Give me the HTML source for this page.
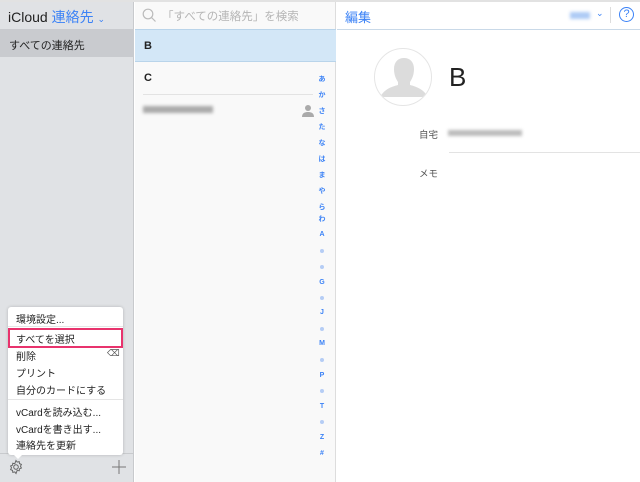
<!DOCTYPE html>
<html><head><meta charset="utf-8"><style>
*{margin:0;padding:0;box-sizing:border-box}
body{width:640px;height:482px;overflow:hidden;font-family:"Liberation Sans","Noto Sans CJK JP",sans-serif;background:#fff;position:relative;color:#222}
.a{position:absolute}
.blur{background:#aaa;filter:blur(1.5px);height:7px}
.idx{position:absolute;left:316px;width:12px;text-align:center;font-size:7px;color:#3b82f6;font-weight:bold}
.dot{position:absolute;left:320px;width:4px;height:4px;border-radius:50%;background:#b5cdf5}
.mi{position:absolute;left:16px;font-size:10px;color:#222}
</style></head><body>
<div class="a" style="left:0;top:0;width:640px;height:2px;background:#e2e2e2"></div>
<div class="a" style="left:0;top:2px;width:134px;height:480px;background:#e0e2e5;border-right:1px solid #c8cacd"></div>
<div class="a" style="left:8px;top:7px;font-size:14px;color:#222">iCloud <span style="color:#3b82f6">連絡先</span> <span style="color:#3b82f6;font-size:9px">⌄</span></div>
<div class="a" style="left:0;top:29px;width:134px;height:28px;background:#c9cbcf"></div>
<div class="a" style="left:9px;top:37px;font-size:11px">すべての連絡先</div>
<div class="a" style="left:0;top:453px;width:134px;height:1px;background:#c8cacd"></div>
<svg class="a" style="left:8px;top:459px" width="16" height="16" viewBox="0 0 16 16" fill="none" stroke="#666" stroke-width="1"><circle cx="8" cy="8" r="2.3"/><path d="M8 1.5l1.2 1.6 2-.5.3 2 1.9.8-.9 1.8.9 1.8-1.9.8-.3 2-2-.5L8 14.5l-1.2-1.6-2 .5-.3-2-1.9-.8.9-1.8-.9-1.8 1.9-.8.3-2 2 .5z"/></svg>
<svg class="a" style="left:112px;top:460px" width="14" height="14" viewBox="0 0 14 14" stroke="#777" stroke-width="1"><path d="M7 0v14M0 7h14"/></svg>
<div class="a" style="left:8px;top:307px;width:115px;height:148px;background:#fff;border-radius:3px;box-shadow:0 0 3px rgba(0,0,0,.2)"></div>
<div class="a" style="left:12px;top:453px;width:0;height:0;border-left:6px solid transparent;border-right:6px solid transparent;border-top:6px solid #fff"></div>
<div class="mi" style="top:311px">環境設定...</div>
<div class="a" style="left:8px;top:326px;width:115px;height:1px;background:#e5e5e5"></div>
<div class="a" style="left:8px;top:328px;width:115px;height:20px;border:2px solid #e8336d"></div>
<div class="mi" style="top:331px">すべてを選択</div>
<div class="mi" style="top:348px">削除</div>
<div class="a" style="left:107px;top:348px;font-size:9px;color:#555">⌫</div>
<div class="mi" style="top:365px">プリント</div>
<div class="mi" style="top:382px">自分のカードにする</div>
<div class="a" style="left:8px;top:399px;width:115px;height:1px;background:#e5e5e5"></div>
<div class="mi" style="top:404px">vCardを読み込む...</div>
<div class="mi" style="top:421px">vCardを書き出す...</div>
<div class="mi" style="top:437px">連絡先を更新</div>
<div class="a" style="left:135px;top:2px;width:201px;height:480px;background:#f9f9f9;border-right:1px solid #ddd"></div>
<svg class="a" style="left:142px;top:8px" width="14" height="14" viewBox="0 0 14 14" fill="none" stroke="#bbb" stroke-width="1.2"><circle cx="6" cy="6" r="4.8"/><path d="M9.5 9.5l4 4"/></svg>
<div class="a" style="left:162px;top:8px;font-size:11.5px;color:#b5b5b5">「すべての連絡先」を検索</div>
<div class="a" style="left:135px;top:29px;width:201px;height:33px;background:#d3e7f7;border-top:1px solid #b9d4ea;border-bottom:1px solid #b9d4ea"></div>
<div class="a" style="left:144px;top:40px;font-size:11px;font-weight:bold">B</div>
<div class="a" style="left:144px;top:72px;font-size:11px;font-weight:bold">C</div>
<div class="a" style="left:143px;top:94px;width:170px;height:1px;background:#e3e3e3"></div>
<div class="a blur" style="left:143px;top:106px;width:70px"></div>
<svg class="a" style="left:302px;top:104px" width="12" height="13" viewBox="0 0 12 13" fill="#aaa"><circle cx="6" cy="4" r="3"/><path d="M0 13c0-4 3-5 6-5s6 1 6 5z"/></svg>
<div class="idx" style="top:74px">あ</div><div class="idx" style="top:90px">か</div><div class="idx" style="top:106px">さ</div><div class="idx" style="top:122px">た</div><div class="idx" style="top:138px">な</div><div class="idx" style="top:154px">は</div><div class="idx" style="top:170px">ま</div><div class="idx" style="top:186px">や</div><div class="idx" style="top:202px">ら</div><div class="idx" style="top:214px">わ</div><div class="idx" style="top:231px">A</div>
<div class="dot" style="top:249px"></div><div class="dot" style="top:265px"></div>
<div class="idx" style="top:279px">G</div><div class="dot" style="top:296px"></div>
<div class="idx" style="top:309px">J</div><div class="dot" style="top:327px"></div>
<div class="idx" style="top:340px">M</div><div class="dot" style="top:358px"></div>
<div class="idx" style="top:372px">P</div><div class="dot" style="top:389px"></div>
<div class="idx" style="top:403px">T</div><div class="dot" style="top:420px"></div>
<div class="idx" style="top:434px">Z</div><div class="idx" style="top:450px">#</div>
<div class="a" style="left:337px;top:29px;width:303px;height:1px;background:#c9d9e8"></div>
<div class="a" style="left:345px;top:7px;font-size:13px;color:#3b82f6">編集</div>
<div class="a" style="left:570px;top:12px;width:20px;height:7px;background:#aecbf5;filter:blur(1.5px)"></div>
<div class="a" style="left:596px;top:8px;font-size:9px;color:#3b82f6">⌄</div>
<div class="a" style="left:610px;top:7px;width:1px;height:16px;background:#ddd"></div>
<div class="a" style="left:619px;top:7px;width:15px;height:15px;border:1px solid #3b82f6;border-radius:50%;font-size:11px;color:#3b82f6;text-align:center;line-height:13px">?</div>
<div class="a" style="left:374px;top:48px;width:58px;height:58px;border-radius:50%;border:1px solid #e5e5e5;overflow:hidden;background:#fff">
<svg width="58" height="58" viewBox="0 0 58 58" fill="#dcdcdc"><path d="M19 20c0-7 4-11 10-11s10 4 10 11c0 6-2 10-4 13v3c8 2 14 5 18 12H5c4-7 10-10 18-12v-3c-2-3-4-7-4-13z"/></svg></div>
<div class="a" style="left:449px;top:62px;font-size:26px;color:#222">B</div>
<div class="a" style="left:419px;top:127px;font-size:9.5px;color:#555">自宅</div>
<div class="a blur" style="left:448px;top:130px;width:74px;height:6px;background:#bbb"></div>
<div class="a" style="left:449px;top:152px;width:191px;height:1px;background:#e3e3e3"></div>
<div class="a" style="left:419px;top:166px;font-size:9.5px;color:#555">メモ</div>
</body></html>
